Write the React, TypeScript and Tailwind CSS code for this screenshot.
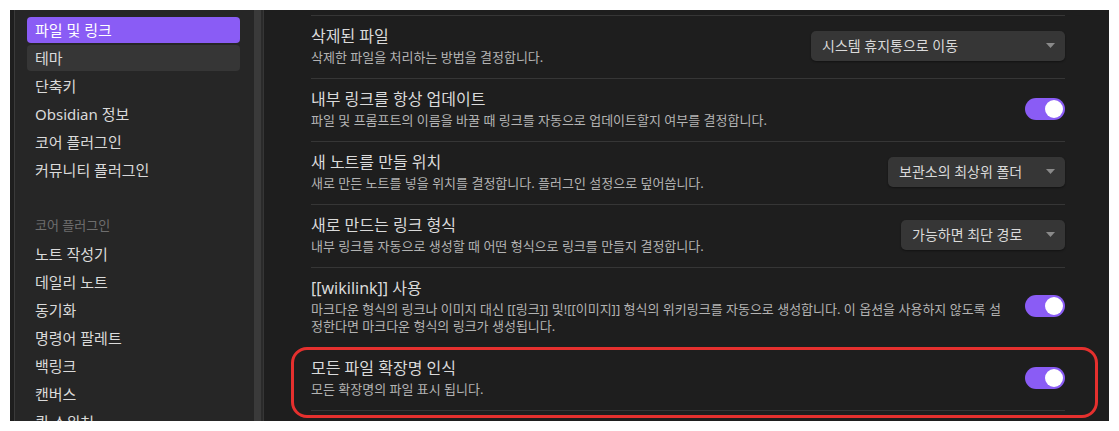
import React from "react";

const topNav = ["파일 및 링크", "테마", "단축키", "Obsidian 정보", "코어 플러그인", "커뮤니티 플러그인"];
const coreNav = ["노트 작성기", "데일리 노트", "동기화", "명령어 팔레트", "백링크", "캔버스", "퀵 스위처"];

function NavItem({ label, active, hover }: { label: string; active?: boolean; hover?: boolean }) {
  return (
    <div
      className={
        "flex h-[26px] shrink-0 items-center rounded-[4px] px-[8px] text-[15px] leading-none " +
        (active ? "bg-[#8a5cf5] text-white" : hover ? "bg-[#363636] text-[#dadada]" : "text-[#dadada]")
      }
    >
      {label}
    </div>
  );
}

function Toggle() {
  return (
    <div className="flex h-[22px] w-[40px] items-center justify-end rounded-full bg-[#8a5cf5] px-[2px]">
      <div className="h-[18px] w-[18px] rounded-full bg-white" />
    </div>
  );
}

function Dropdown({ label, width }: { label: string; width: string }) {
  return (
    <div
      className={
        "flex h-[30px] items-center justify-between rounded-[5px] bg-[#363636] pl-[11px] pr-[10px] text-[14px] text-[#dadada] shadow-[0_1px_2px_rgba(0,0,0,0.4)] " +
        width
      }
    >
      <span>{label}</span>
      <svg width="9" height="5" viewBox="0 0 9 5">
        <path d="M0 0h9L4.5 5z" fill="#8a8a8a" />
      </svg>
    </div>
  );
}

function SettingRow({
  title,
  desc,
  control,
  outlined,
}: {
  title: string;
  desc: React.ReactNode;
  control: React.ReactNode;
  outlined?: boolean;
}) {
  return (
    <div className="relative flex items-center border-t border-[#363636] pt-[9px] pb-[12px]">
      <div className="mr-4 min-w-0 flex-1">
        <div className="text-[16px] leading-[22px] text-[#dadada]">{title}</div>
        <div className="mt-[2px] text-[13px] leading-[17px] text-[#b3b3b3]">{desc}</div>
      </div>
      <div className="flex shrink-0 justify-end">{control}</div>
      {outlined && (
        <div className="pointer-events-none absolute top-[-1px] bottom-[-8px] -left-[20px] -right-[33px] rounded-[16px] border-[3px] border-[#e5302e]" />
      )}
    </div>
  );
}

export default function App() {
  return (
    <div className="h-[431px] w-[1119px] bg-white p-[10px] font-['Noto_Sans','Noto_Sans_CJK_KR',sans-serif]">
      <div className="flex h-[411px] w-[1099px] overflow-hidden bg-[#1e1e1e]">
        <div className="w-[5px] shrink-0 border-r border-[#3a3a3a] bg-[#1e1e1e]" />
        <aside className="flex w-[239px] shrink-0 flex-col gap-[2px] bg-[#262626] pt-[7px] pl-[12px] pr-[14px]">
          {topNav.map((label, i) => (
            <NavItem key={label} label={label} active={i === 0} hover={i === 1} />
          ))}
          <div className="mt-[28px] flex h-[26px] shrink-0 items-center px-[8px] text-[13px] text-[#6e6e6e]">코어 플러그인</div>
          {coreNav.map((label) => (
            <NavItem key={label} label={label} />
          ))}
        </aside>
        <div className="w-[7px] shrink-0 bg-[#3a3a3a]" />
        <div className="w-[3px] shrink-0 border-r border-[#363636] bg-[#2a2a2a]" />
        <main className="flex-1 pt-[5px] pl-[47px] pr-[44px]">
          <SettingRow
            title="삭제된 파일"
            desc="삭제한 파일을 처리하는 방법을 결정합니다."
            control={<Dropdown label="시스템 휴지통으로 이동" width="w-[254px]" />}
          />
          <SettingRow
            title="내부 링크를 항상 업데이트"
            desc="파일 및 프롬프트의 이름을 바꿀 때 링크를 자동으로 업데이트할지 여부를 결정합니다."
            control={<Toggle />}
          />
          <SettingRow
            title="새 노트를 만들 위치"
            desc="새로 만든 노트를 넣을 위치를 결정합니다. 플러그인 설정으로 덮어씁니다."
            control={<Dropdown label="보관소의 최상위 폴더" width="w-[177px]" />}
          />
          <SettingRow
            title="새로 만드는 링크 형식"
            desc="내부 링크를 자동으로 생성할 때 어떤 형식으로 링크를 만들지 결정합니다."
            control={<Dropdown label="가능하면 최단 경로" width="w-[164px]" />}
          />
          <SettingRow
            title="[[wikilink]] 사용"
            desc={
              <>
                <span className="block whitespace-nowrap">
                  마크다운 형식의 링크나 이미지 대신 [[링크]] 및![[이미지]] 형식의 위키링크를 자동으로 생성합니다. 이 옵션을 사용하지 않도록 설
                </span>
                <span className="block whitespace-nowrap">정한다면 마크다운 형식의 링크가 생성됩니다.</span>
              </>
            }
            control={<Toggle />}
          />
          <SettingRow
            title="모든 파일 확장명 인식"
            desc="모든 확장명의 파일 표시 됩니다."
            control={<Toggle />}
            outlined
          />
          <div className="border-t border-[#363636]" />
        </main>
      </div>
    </div>
  );
}
